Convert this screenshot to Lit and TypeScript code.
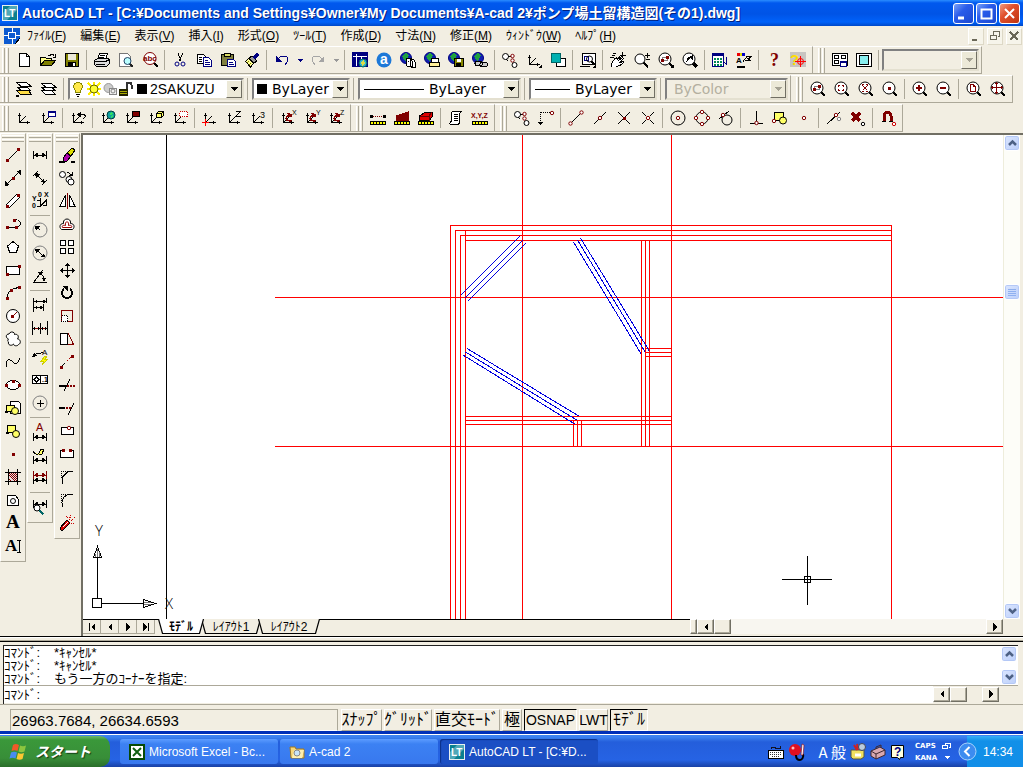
import { LitElement, html, svg, css, nothing } from "lit";
import { customElement, property } from "lit/decorators.js";

const R = "#800000";
const G = "#808080";
const Y = "#ffff66";

/* small drawing helpers on a 16 x 16 grid */
const p = (d: string, s = "#000", f = "none", w = 1) =>
  svg`<path d=${d} stroke=${s} fill=${f} stroke-width=${w}></path>`;
const dash = (d: string, s = "#000", f = "none", pattern = "1 1", w = 1) =>
  svg`<path d=${d} stroke=${s} fill=${f} stroke-dasharray=${pattern} stroke-width=${w}></path>`;
const t = (x: number, y: number, size: number, str: string, c = "#000", w = 400, fam = "Liberation Sans") =>
  svg`<text x=${x} y=${y} font-size=${size} fill=${c} font-weight=${w} font-family=${fam}>${str}</text>`;
const C = (x: number, y: number, r: number) =>
  `M${x - r} ${y}a${r} ${r} 0 1 0 ${2 * r} 0a${r} ${r} 0 1 0 ${-2 * r} 0z`;
const B = (x: number, y: number, w: number, h: number) => `M${x} ${y}h${w}v${h}h${-w}z`;
/* round outline kept smooth while straight strokes stay crisp */
const round = (x: number, y: number, r: number, s = "#000", f = "none") =>
  svg`<circle cx=${x} cy=${y} r=${r} stroke=${s} fill=${f} shape-rendering="geometricPrecision"></circle>`;
const dot = (x: number, y: number, c = R) => p(B(x - 1, y - 1, 3, 3), "none", c);
const ring = (x: number, y: number, c = R) => round(x, y, 1.7, c, "#fff");

const axes = [
  p("M3.5 4v8.5h10"),
  p("M3.5 12.5l6-6"),
  p("M2 6l1.5-3.5L5 6zM11 11l3.5 1.5-3.5 1.5z", "none", "#000"),
];
const lens = [p("M11 11l4 4", "#000", "none", 2), round(7, 7, 6, "#000", "#fff")];
const corner = p("M16 12v4h-4z", "none", "#000");
const globe = (x: number, y: number, r: number) => [
  round(x, y, r, "#004040", "#10a0a0"),
  p(`M${x - 2} ${y - 1}l2-2 2 1-2 2zM${x} ${y + 3}l1-3 2 1z`, "none", "#30e060"),
];
const swirl = [p("M12 6.5c-3-2-6 0-6 2s4 3 6 2", R, "none", 1.5), p("M7 3l5 1-3 3z", "none", R)];
const dimH = (y: number, c = "#000") => [
  p(`M1.5 ${y - 4}v8M14.5 ${y - 4}v8M2 ${y}h12`, c),
  p(`M2 ${y}l4-2.5v5zM14 ${y}l-4-2.5v5z`, "none", c),
];
const ruler = [p(B(0.5, 11.5, 15, 3), "#000", "#ff0"), p("M3.5 12v2M6.5 12v2M9.5 12v2M12.5 12v2")];
const web = [round(6, 6, 5.5, "#000080", "#1020b0"), p("M2 4l4-3 3 2-2 4-2 2z", "none", "#20a040")];

const ICONS: Record<string, unknown> = {
  new: [p("M3.5 1.5h7l3 3v10h-10z", "#000", "#fff"), p("M10.5 1.5v3h3")],
  open: [
    p("M.5 13.5v-8h5l1 1h5v3", "#000", "#ff8"),
    p("M.5 13.5l4-5h11l-4 5z", "#000", "#808000"),
    p("M8 3.5h2l1-1h2l1.5 2M15.5 2v3h-3"),
  ],
  save: [p(B(1.5, 1.5, 13, 13), "#000", "#808000"), p(B(4, 2, 8, 6), "none", "#ece9d8"), p(B(4, 10, 8, 5), "none", "#000"), p(B(9, 11, 2, 3), "none", "#fff")],
  print: [p("M5.5 1.5h8l-2 6h-8z", "#000", "#fff"), p("M6 3.5h5M5 5.5h5"), p("M.5 8.5l3-2h11l1 2v3l-3 3h-10l-2-2z", "#000", "#ddd"), p("M.5 9.5h11l4-2M2 12.5h9", "#000")],
  preview: [p("M1.5 1.5h8l3 3v10h-11z", "#777", "#fff"), p("M12 12l3 3", "#222", "none", 2), round(9.5, 9, 3.5, "#246", "#bff")],
  find: [p("M12 11l3.5 4", "#000", "none", 2), round(8, 6.5, 6, R, "#fff"), t(1, 9, 8, "abc", R, 700)],
  cut: [p("M6 1l3 8M11 1L7 9"), round(5, 12, 2, "#000080"), round(11, 12, 2, "#000080")],
  copy: [p("M1.5 2.5h6l2 2v7h-8z", "#000", "#fff"), p("M3 5.5h3M3 7.5h3M3 9.5h3"), p("M7.5 5.5h5l3 3v6h-8z", "#000080", "#fff"), p("M9 8.5h3M9 10.5h5M9 12.5h5", "#000080")],
  paste: [p("M1.5 2.5h12v11h-12z", "#000", "#808040"), p(B(4.5, 1.5, 6, 3), "#000", "#dd6"), p("M7.5 7.5h6l2 2v5h-8z", "#000080", "#fff"), p("M9 10.5h4M9 12.5h5", "#000080")],
  brush: [p("M1.5 9.5l3-3 5 5-3 3.5z", "#000", "#ff9"), p("M3 11l2-2M5 13l2-2", "#880"), p("M5 6l3-2 5 5-3 2z", "#000", "#999"), p("M9 5l4-4 2 2-4 4z", "#000080", "#000080")],
  undo: [p("M4 7c3-4 10-4 10 1 0 3-3 3-3 5", "#000080", "none", 1), p("M2 4v6h6z", "none", "#000080")],
  redo: [p("M12 7c-3-4-10-4-10 1 0 3 3 3 3 5", "#a5a5a5", "none", 1), p("M14 4v6H8z", "none", "#a5a5a5")],
  today: [p(B(0, 0, 16, 15), "none", "#000080"), p("M1 4.5h8v5M4.5 2v12M9 4.5h6", "#fff"), round(11, 11, 4, "#066", "#30b0d0"), p("M9 10l3-2 1 3-3 3z", "none", "#dd4")],
  ahome: [round(8, 8, 7.5, "none", "#1c78d8"), t(4, 12, 14, "a", "#fff", 700)],
  meet: [web, p("M6 9a3 3 0 0 1 6 0v5h-5zM10 8a3 3 0 0 1 5 2v5h-4z", "#000", "#fff"), p("M8 9h1M12 11h1")],
  publish: [web, p("M7 6h7l1 4h-8z", "#000", "#fff"), p("M5 10.5h10v4h-10z", "#000", "#fe9")],
  saveweb: [web, p(B(6.5, 6.5, 9, 8), "#000", "#880"), p(B(9, 7, 4, 3), "none", "#fff"), p(B(8, 11, 5, 3), "none", "#000")],
  link: [web, p("M4.5 9.5h4a2 2 0 0 1 0 4h-3a2 2 0 0 1-1-4zM10.5 10.5h3a2 2 0 0 1 0 4h-4a2 2 0 0 1 1-4z", "#000", "#ccc")],
  track: [round(3.5, 4.5, 3, "#000", "#fff"), p("M6 4.5h4"), ring(10.5, 4), ring(10.5, 8.5), p("M4.5 7l1 2"), round(12.5, 13, 2.5, "#000", "#fff")],
  ucsfly: [axes, corner],
  rects: [p("M6 6.5h9v8h-9z", "#000", "#fff"), p(B(1.5, 1.5, 9, 9), "#066", "#00b0b0")],
  zoomwin: [p(B(2.5, 1.5, 13, 11), "#000", "#fff"), p("M4 4.5h4v4h-4z", "#000080"), round(9.5, 7, 3), p("M11.5 9.5l3 3", "#000", "none", 2), p("M0 14.5h10"), corner],
  pan: [p("M1.5 14.5c0-5 2-7 5-9l1 2 3-4 1 1-3 4 4-3 1 1-4 4 4-1c0 2-4 5-8 5", "#000", "#fff"), p("M0 5.5h4M2 3.5h3M3 1.5h3M12.5 0v6M10 3.5h6", "#000")],
  zoomrt: [p("M9.5 10.5l4.5 5", "#000", "none", 2), round(6, 7, 5, "#000", "#fff"), p("M11 3.5h5M13.5 1v5M12 7.5h4", "#000")],
  zoombox: [lens, p(B(4.5, 5.5, 5, 3), G), dot(4, 8), dot(9, 5), corner],
  zoomprev: [p("M11 11l4 4", "#000", "none", 3), round(7, 7, 6, "#000", "#fff"), p("M4 10c1-5 4-6 6-6l1-2v6L8 6c-2 2-3 3-4 4z", "none", "#000")],
  props: [p(B(0.5, 1.5, 11, 13), "#000080", "#fff"), p(B(1, 2, 10, 2), "none", "#000080"), dash("M2 7h8M2 10h8M2 13h8", "#085", "none", "2 1", 2), p("M13.5 5h1v7M12 10l3 3", "#000080")],
  match: [p("M1 2.5h2.5", "#e00", "none", 3), p("M3.5 2.5H6", "#dd0", "none", 3), p("M6 2.5h2.5", "#00c", "none", 3), t(0, 11, 8, "A", "#000", 700), p("M1 14.5h8", "#000", "none", 2), p("M7 9.5l4-5h5M9 8.5h5l-2-2 3-1")],
  help: [t(4, 14, 18, "?", R, 700, "Liberation Serif")],
  helpx: [p(B(0, 0, 16, 15), "none", "#c8c4c0"), t(0, 13, 15, "?", "#fd0", 700), round(10.5, 9.5, 3, "#f00"), p("M10.5 4v11M5 9.5h11", "#f00")],
  layouts: [p("M.5 1.5h15v12h-15z", "#000", "#fff"), p(B(2.5, 3.5, 4, 3), "#000"), p(B(9.5, 3.5, 4, 3), "#000"), p(B(2.5, 8.5, 4, 3), "#000"), p(B(8.5, 9.5, 6, 5), "#000080", "#fff"), p("M8 9.5h7", "#000080", "none", 2)],
  layout1: [p(B(0.5, 1.5, 15, 13), "#000", "#fff"), p(B(3.5, 3.5, 9, 9), "#000", "#8ee")],
  layers: [p("M.5 9.5l4 4h11l-3-4z", "#000", "#fd4"), p("M1.5 6.5l4 3h9l-3-3z", "#000", "#fff"), p("M.5 1.5h10l4 3.5h-10z", "#000", "#fff"), p("M0 14.5h3", "#000", "none", 2)],
  layerprev: [p("M1.5 9.5l4 4h10l-4-4z", "#000", "#fff"), p("M1.5 6.5l4 3h10l-4-3z", "#000", "#fff"), p("M1.5 2.5h10l4 3.5h-10z", "#000", "#fff")],
  bulb: [p("M5.5 9.5c-3-3-2-8 2.5-8s5.500 5 2.500 8v2h-5z", "#880", "#ffe94a"), p("M6 13.5h4M7 15.5h2")],
  sun: [p("M2 2l12 12M14 2L2 14M8 1v14M1 8h14", "#fe0", "none", 2), round(8, 8, 4, "#660", "#ff3")],
  sunvp: [round(6.5, 7, 4.5, "#999", "#ccc"), p(B(7.5, 7.5, 7, 6), "#888", "#eee"), round(11, 10, 2, "#888")],
  lock: [p(B(1, 8, 9, 7), "none", "#220"), p("M2 10.5h7M2 12.5h7", "#aa0"), p("M8.5 8V4a2.5 2.5 0 0 1 5 0v4", "#333", "none", 2)],
  black: [p(B(3, 3, 10, 10), "none", "#000")],
  zbox: [lens, p(B(4.5, 5.5, 5, 3), G), dot(4, 8), dot(9, 5)],
  zdyn: [lens, p("M4.5 6V4.5H6M9.5 6V4.5H8M4.5 8v1.5H6M9.5 8v1.5H8", R)],
  zscale: [lens, p("M4.5 4.5l5 5M9.5 4.5l-5 5M4 3.5h2M8 3.5h2M4 10.5h2M8 10.5h2", R)],
  zcenter: [lens, dot(7, 7)],
  zin: [lens, p("M4 7h6M7 4v6", R, "none", 2)],
  zout: [lens, p("M4 7h6", R, "none", 2)],
  zall: [lens, p("M4.5 3.5h3l2 2v5h-5zM7.5 3.5v2h2", R)],
  zext: [lens, p("M1 6.5h12M6.5 1v12M2.5 5v3M11.5 5v3M5 2.5h3M5 11.5h3", R)],
  ucs: axes,
  ucswin: [axes, p(B(8.5, 1.5, 7, 5), "#000080", "#fff"), p("M8 2h8", "#000080", "none", 2)],
  ucsprev: [axes, p("M9 4.5h4c3 0 3 3 0 4"), p("M7 4.5l4-3v6z", "none", "#000")],
  ucsworld: [axes, globe(11, 5, 4)],
  ucsobj: [axes, p(B(8.5, 1.5, 7, 5), "#000", R)],
  ucsface: [axes, p("M8.5 3.5l2-2h5v4l-2 2h-5z", "#000", Y), p("M8.5 3.5h5v4M13.5 3.5l2-2")],
  ucsview: [axes, dash("M7.5 1.5h8v5h-8z", "#c00", "#fff")],
  ucsorigin: [axes, p("M0 12.5h7M3.5 9v7", "#f00", "none", 1)],
  ucsz: [axes, p("M9.5 1.5h5l-5 5h5")],
  ucs3: [axes, t(10, 8, 9, "3")],
  ucsrx: [axes, swirl, t(12, 5, 7, "X")],
  ucsry: [axes, swirl, t(12, 5, 7, "Y")],
  ucsrz: [axes, swirl, t(12, 5, 7, "Z")],
  dist: [ruler, dash("M3 6.5h11", R), dot(1, 6, "#000"), dot(14, 6, "#000")],
  area: [ruler, p("M2.5 10.5V6l12-4v8.5z", R, R)],
  mass: [ruler, p("M1.5 10.5V6l6-4h7v4l-3 4.5z", "#000", "#d00"), p("M2 6.5h9v4M11 6l3-4", "#600")],
  list: [p("M4.5 1.5h9c-2 0-2 3-2 5v5c0 3-1 3-2 3h-7c-1 0-1-3 1-3v-7c0-2 0-3 1-3z", "#000", "#fff"), p("M6 4.5h4M6 6.5h4M6 8.5h4M6 10.5h4")],
  xyz: [ruler, t(-1, 8, 7, "X,Y,Z", R, 700)],
  from: [dash("M2.5 2v10", "#000"), dash("M2.5 2.5h9", "#000"), p("M0 12h5l-2.5 3z", "none", "#000"), ring(14, 3)],
  endp: [p("M3 13L13 3"), ring(2.5, 13.5), ring(13.5, 2.5)],
  midp: [p("M2 14L14 2"), ring(8, 8)],
  intp: [p("M2 2l12 12M14 2L2 14"), p(B(7, 7, 2, 2), R, R)],
  appint: [p("M2 2l4 4M14 2l-4 4M14 14l-4-4M2 14l4-4"), ring(8, 8)],
  cen: [round(8, 8, 7), ring(8, 8)],
  quad: [round(8, 8, 6), ring(8, 2), ring(8, 14), ring(2, 8), ring(14, 8)],
  tan: [round(9, 10, 5), p("M1 9l10-8"), ring(5, 5)],
  perp: [p("M8.5 1v12M2 13.5h13"), ring(8.5, 13)],
  ins: [p(B(2.5, 2.5, 9, 8), "#000", Y), round(11, 10.5, 3.5, "#000", Y), ring(2, 11)],
  node: [ring(8, 8)],
  near: [p("M1 14L14 2"), ring(10, 5), ring(13, 9, G)],
  none: [p("M2 3l8 8M10 3l-8 8", R, "none", 3), ring(13, 14, "#000")],
  osnap: [p("M4 12V6a3.5 3.5 0 0 1 7 0v6", R, "none", 3), p("M2 11.5h4M9 11.5h4", "#000"), ring(14, 14, "#c00")],
  line: [p("M3 13L13 3"), dot(2, 13), dot(13, 2)],
  xline: [p("M2 14L14 2"), dot(8, 8), p("M0 16v-5l5 4zM16 0v5l-5-4z", "none", "#000")],
  mline: [p("M1.5 11.5l10-10 3 3-10 10z", "#000", "#fff"), dot(2, 13), dot(13, 2)],
  pline: [p("M9 4.5c8-3 8 7 2 7H2"), dot(9, 4), dot(2, 11), dot(11, 11)],
  polygon: [p("M8 2.5l5.5 4.5-2 6h-7l-2-6z", "#000", "#fff")],
  rect: [p(B(1.5, 4.5, 13, 8), "#000", "#fff"), dot(2, 12), dot(14, 4)],
  arc: [p("M2 13c0-6 5-10 12-10.5"), dot(2, 13), dot(6, 5), dot(14, 2)],
  circle: [round(8, 8, 6.5, "#000", "#fff"), p("M7.5 8.5l4-4", R), dot(7, 8)],
  cloud: [svg`<path shape-rendering="geometricPrecision" stroke="#000" fill="#fff" d="M3.500 8C.5 7 .5 3 4 3c1-3 6-2.500 5.500.5c3-1 5 2 3 4.500c3 0 4 4.500 1 5.500c-1 2-5 1.500-5-.5c-2 2.500-6 1-5-2c-1-.5-1-2 0-3z"></path>`],
  spline: [p("M1 13c0-12 6-6 8-4s4 0 6-5")],
  ellipse: [svg`<ellipse cx="8" cy="8" rx="6.500" ry="4.500" stroke="#000" fill="#fff"></ellipse>`, dot(1, 8), dot(14, 8), dot(8, 4)],
  insert: [p("M5.5 1.5h8l2 2v10h-10z", "#000", "#fff"), p(B(1.5, 5.5, 8, 6), "#000", Y), round(10, 11, 3.5, "#000", Y), p("M0 11.5h3", "#000", "none", 2)],
  block: [p(B(2.5, 2.5, 8, 7), "#000", Y), round(11, 11, 3.5, "#000", Y), p("M1 9.5h3", "#000", "none", 2)],
  point: [dot(8, 8)],
  hatch: [p(B(3, 3, 10, 10), "none", "#edd"), p("M3 9l4 4M3 5l8 8M5 3l8 8M9 3l4 4M3 12l1 1M3 3l10 10M7 3l6 6", R), p("M0 3.5h16M0 12.5h16M3.5 0v16M12.5 0v16")],
  region: [p("M2.5 3.5h8l3 4v6h-11z", "#000", "#fff"), round(8, 9, 2.5)],
  mtext: [t(1, 13, 19, "A", "#000", 700, "Liberation Serif")],
  atext: [t(0, 13, 17, "A", "#000", 700, "Liberation Serif"), p("M12 2.5h4M14.5 3v11M12 14.5h4")],
  dlin: dimH(8),
  dali: [p("M1 6l5-5M10 15l5-5M4 4l8 8"), p("M3 3l5 1-4 4zM13 13l-5-1 4-4z", "none", "#000")],
  dord: [t(0, 8, 7, "Y", "#000", 700), t(0, 15, 7, "0", "#000", 700), t(6, 4, 7, "0", "#000", 700), t(12, 4, 7, "X", "#000", 700), p("M5 7.5h4M5 13.5h4M8.5 5v8l6-6M14.5 6v6h-4")],
  drad: [round(8, 8, 7, G), p("M8 8L5 5"), p("M3 4h5l-4 5z", "none", "#000")],
  ddia: [round(8, 8, 7, G), p("M5 5l6 6"), p("M3 4h5l-4 4zM13 12H8l4-4z", "none", "#000")],
  dang: [p("M1 14.5h14M2 14l9-12M7 5c4 1 5 4 5 8"), p("M6 4h5L8 8zM12 14l-2-4h4z", "none", "#000")],
  dbase: [p("M1.5 1v14M14.5 1v5M11.5 7v7M2 4.5h12M2 10.5h9"), p("M2 4.5l3-2v4zM14 4.5l-3-2v4zM2 10.5l3-2v4zM11 10.5l-3-2v4z", "none", "#000")],
  dcont: [p("M.5 1v14M15.5 1v14M8.5 3v11"), p("M1 8.5h14", R), p("M1 8.5l2-2v4zM15 8.5l-2-2v4zM8 8.5l-2-2v4zM9 8.5l2-2v4z", "none", "#000")],
  qlead: [p("M3 6c4-4 5 0 8-3"), p("M0 8l2-4 3 3z", "none", "#000"), t(10, 6, 8, "A"), p("M13 7l-4 5h3l-2 4 6-6h-3l2-3z", "#cc0", "#ff0")],
  tol: [p(B(0.5, 3.5, 15, 8), "#000", "#fff"), p("M8.5 3v9"), p("M4.5 5L7 7.5 4.5 10 2 7.5z"), t(10, 10, 7, ".1", "#000", 700)],
  cmark: [round(8, 8, 7, G), p("M5 8.5h7M8.5 5v7")],
  dedit: [dimH(13), t(4, 7, 11, "A", R)],
  dtedit: [dimH(13), p("M1 4c2 4 4 4 6 2l2-4h3l-2 5-3 1", "#000", Y)],
  dupd: [dimH(10), dimH(5, R)],
  dstyle: [dimH(5), round(5, 9, 3, "#000", "#fff"), p("M7.5 11.5l4 4", "#066", "none", 2)],
  erase: [p("M4 11l4-5 4 3-4 5H5z", "#000", "#a0a"), p("M8 6l5-5 3 2-4 6z", "#000", "#dd0"), p("M0 14.5h6M12 14.5h4", "#000", "none", 2)],
  mcopy: [round(3.5, 4.5, 3, "#000", "#fff"), round(10, 9.5, 3, "#000", "#fff"), round(12, 12, 3, "#000", "#fff"), p("M8 2l5 3M13 2v3h-3")],
  mirror: [p("M6.5 2v11.5H1z", "#000", "#fff"), p("M10.5 2v11.5H16z", "#000", "#fff"), p("M8.5 0v16", R)],
  offset: [svg`<g shape-rendering="geometricPrecision"><path d="M2.500 13.500c-2.500-2-2-6 2-6c-1-6 8-6 7 0c4 0 4.500 4 2 6z" stroke="#000" fill="#fff"></path><path d="M3.500 11.500c-1-2 1-2.500 3-2c-1-5 4-5 3 0c2-.5 4 0 3 2z" stroke="#900" fill="none"></path></g>`],
  array: [p(B(1.5, 1.5, 5, 5), "#000", "#fff"), p(B(9.5, 1.5, 5, 5), "#000", "#fff"), p(B(1.5, 9.5, 5, 5), "#000", "#fff"), p(B(9.5, 9.5, 5, 5), "#000", "#fff")],
  move: [p("M1 8.5h14M8.5 1v14"), p("M1 8.5l3-3v6zM16 8.5l-3-3v6zM8.5 1l-3 3h6zM8.5 16l-3-3h6z", "none", "#000")],
  rotate: [p("M5 4a5 5 0 1 0 6 0", "#000", "none", 2), p("M3 1h6v6z", "none", "#000")],
  scale: [p(B(2.5, 2.5, 11, 11), R), dash("M2.5 7.5h6v6h-6z", "#000", "#fff")],
  stretch: [p("M1.5 2.5h7v11h-7z", "#000", "#fff"), p("M8.5 2.5h1l5 11h-6", R)],
  lengthen: [dash("M2 13L13 2", "#a00", "none", "2 2"), p("M2 13l4-4"), dot(2, 13), dot(13, 2)],
  trim: [p("M0 8.5h7", "#000", "none", 2), dash("M8 8.5h8", R, "none", "2 1", 2), p("M5 14l6-12")],
  extend: [p("M0 7.5h6", "#000", "none", 2), dash("M7 7.5h6", R, "none", "2 1", 2), p("M9 15l6-12")],
  break1: [p(B(2.5, 4.5, 12, 7), "#000", "#fff"), ring(10, 5)],
  break2: [p("M4 4.5H1.5v7h13v-7H12", "#000", "#fff"), dot(4, 4), dot(11, 4)],
  chamfer: [p("M14 2.5H9l-6 6v6"), dash("M9 2.5H2.5v6")],
  fillet: [p("M14 2.5h-3a8 8 0 0 0-8 8v4"), dash("M9 2.5H2.5v6")],
  explode: [p("M1 13l7-8 3 3-7 7H2z", "#000", "#d00"), p("M4 12l5-5", "#fff"), dash("M10 5l2-5M12 6l4-4M12 8h4M9 3L7 1", "#c00")],
  down: [p("M5 7h6l-3 3z", "none", "#000080")],
  downgray: [p("M5 7h6l-3 3z", "none", "#999")],
};

const LABELS: Record<string, string> = { new: "新規作成", open: "開く", save: "上書き保存", print: "印刷", undo: "元に戻す", redo: "やり直し", cut: "切り取り", copy: "コピー", paste: "貼り付け" };

@customElement("cad-icon")
class CadIcon extends LitElement {
  @property() name = "";
  static styles = css`
    :host { display: block; width: 16px; height: 16px; flex: none; }
    .glyph { display: block; width: 16px; height: 16px; overflow: visible; }
  `;
  render() {
    return html`<svg class="glyph" viewBox="0 0 16 16" shape-rendering="crispEdges" aria-hidden="true">${ICONS[this.name] ?? nothing}</svg>`;
  }
}

@customElement("cad-toolbar")
class CadToolbar extends LitElement {
  @property() items = "";
  @property({ type: Boolean, reflect: true }) vertical = false;
  @property({ type: Boolean, reflect: true }) first = false;
  static styles = css`
    :host { display: flex; box-sizing: border-box; height: 28px; align-items: center; border-top: 1px solid #fff; border-bottom: 1px solid #aca899; border-right: 1px solid #aca899; padding-right: 2px; flex: none; }
    :host([vertical]) { flex-direction: column; width: 26px; height: auto; padding: 0 0 4px; border-bottom: 1px solid #aca899; border-left: 1px solid #fff; }
    .grip { width: 7px; height: 25px; margin: 0 3px 0 5px; flex: none; box-sizing: border-box; background: linear-gradient(90deg, #fff 0 1px, #f2eee2 1px 2px, #aca899 2px 3px, transparent 3px 4px, #fff 4px 5px, #f2eee2 5px 6px, #aca899 6px 7px); }
    :host([first]) .grip { margin-left: 2px; }
    :host([vertical]) .grip { width: 22px; height: 7px; margin: 1px 0; background: linear-gradient(180deg, #fff 0 1px, #f2eee2 1px 2px, #aca899 2px 3px, transparent 3px 4px, #fff 4px 5px, #f2eee2 5px 6px, #aca899 6px 7px); }
    .tool { width: 24px; height: 24px; padding: 0; border: 0; background: none; display: flex; align-items: center; justify-content: center; flex: none; }
    .tool.small { width: 12px; }
    :host([vertical]) .tool { height: 23px; }
    .sep { width: 1px; height: 20px; margin: 0 3px 0 2px; background: #aca899; flex: none; }
    :host([vertical]) .sep { width: 20px; height: 1px; margin: 3px 0 2px; }
  `;
  render() {
    return html`<span class="grip"></span>
      ${this.items.split(" ").filter(Boolean).map((n) =>
        n === "|" ? html`<span class="sep"></span>`
        : html`<button type="button" class="tool ${n.startsWith("down") ? "small" : ""}" aria-label=${LABELS[n] ?? n}><cad-icon name=${n}></cad-icon></button>`)}
      <slot></slot>`;
  }
}

const seg = (x1: number, y1: number, x2: number, y2: number) => `M${x1} ${y1}L${x2} ${y2}`;
const RED = [
  seg(450.5, 619, 450.5, 225), seg(455.5, 619, 455.5, 230), seg(460.5, 619, 460.5, 235), seg(465.5, 619, 465.5, 230),
  seg(450, 225.5, 892, 225.5), seg(455, 230.5, 892, 230.5), seg(460, 235.5, 892, 235.5), seg(465, 240.5, 892, 240.5),
  seg(522.5, 135, 522.5, 619), seg(671.5, 135, 671.5, 619), seg(891.5, 225, 891.5, 619),
  seg(641.5, 240, 641.5, 446), seg(645.5, 240, 645.5, 446), seg(649.5, 240, 649.5, 446),
  seg(645, 348.5, 671, 348.5), seg(645, 352.5, 671, 352.5), seg(645, 356.5, 671, 356.5),
  seg(465, 416.5, 671, 416.5), seg(465, 420.5, 671, 420.5), seg(465, 424.5, 671, 424.5),
  seg(573.5, 420, 573.5, 446), seg(577.5, 420, 577.5, 446), seg(581.5, 420, 581.5, 446),
  seg(275, 446.5, 1400, 446.5), seg(275, 297.5, 1400, 297.5),
].join("");
const BLUE = [
  seg(461, 295, 520, 236), seg(465, 298, 523, 240), seg(468, 301, 526, 243),
  seg(573.5, 242, 641.5, 354.5), seg(577.5, 240, 645.5, 352.5), seg(580.5, 238, 649, 350.5),
  seg(467, 348.5, 579.5, 416.5), seg(465.5, 352, 577.5, 420.5), seg(463, 355, 575.5, 424.5),
].join("");

const tri = (d: string) => html`<svg class="tri" viewBox="0 0 10 10" width="10" height="10" shape-rendering="crispEdges" aria-hidden="true"><path d=${d}></path></svg>`;
const LEFT = "M7 1v8L3 5z", RIGHT = "M3 1v8l4-4z", DOWN = "M1 3h8L5 7z";
const chev = (up: boolean) => html`<svg width="9" height="8" viewBox="0 0 9 8" aria-hidden="true"><path d=${up ? "M1 6l3.5-3.5L8 6" : "M1 2l3.5 3.5L8 2"} fill="none" stroke="#4d6185" stroke-width="2.500"></path></svg>`;
const ltLogo = html`<svg width="16" height="16" viewBox="0 0 16 16" aria-hidden="true"><rect x=".5" y=".5" width="15" height="15" fill="#0a8090" stroke="#e8f0f0"></rect><path d="M1 8l7-7h7v4L5 15H1z" fill="#50a8b8"></path><text x="2" y="12" font-family="Liberation Sans" font-size="10" font-weight="700" fill="#fff">LT</text></svg>`;

const combo = (cls: string, label: string, text: string, before: unknown = nothing, disabled = false) => html`
  <span class="combo ${cls}">${before}<select aria-label=${label} ?disabled=${disabled}><option>${text}</option></select><span class="drop">${tri(DOWN)}</span></span>`;

const MENUS: [string, string][] = [["ﾌｧｲﾙ", "F"], ["編集", "E"], ["表示", "V"], ["挿入", "I"], ["形式", "O"], ["ﾂｰﾙ", "T"], ["作成", "D"], ["寸法", "N"], ["修正", "M"], ["ｳｨﾝﾄﾞｳ", "W"], ["ﾍﾙﾌﾟ", "H"]];
const MODES: [string, number, boolean][] = [["ｽﾅｯﾌﾟ", 41, false], ["ｸﾞﾘｯﾄﾞ", 48, false], ["直交ﾓｰﾄﾞ", 66, false], ["極", 20, false], ["OSNAP", 53, true], ["LWT", 29, false], ["ﾓﾃﾞﾙ", 38, true]];
const TABS: [string, number, boolean][] = [["ﾓﾃﾞﾙ", 46, true], ["ﾚｲｱｳﾄ1", 60, false], ["ﾚｲｱｳﾄ2", 62, false]];

@customElement("app-root")
class AppRoot extends LitElement {
  static styles = css`
    :host { display: flex; flex-direction: column; min-height: 100vh; background: #f2eee2; color: #000; font: 12px/16px "Liberation Sans", "Noto Sans CJK JP", sans-serif; overflow: hidden; }
    button { font: inherit; color: inherit; padding: 0; border: 0; background: none; display: flex; align-items: center; justify-content: center; flex: none; box-sizing: border-box; white-space: nowrap; }
    select, input { font: inherit; color: inherit; border: 0; outline: 0; padding: 0; margin: 0; background: none; appearance: none; min-width: 0; flex: 1; border-radius: 0; }
    .grow { flex: 1; }

    .title { height: 26px; display: flex; align-items: center; padding: 0 3px 0 2px; box-sizing: border-box; gap: 4px; background: linear-gradient(#2a8cff 0, #0058ee 3px, #0054e6 14px, #0062fa 22px, #0048c8 26px); color: #fff; }
    .title h1 { margin: 0; font: 700 14px/20px "Liberation Sans", "Noto Sans CJK JP", sans-serif; flex: 1; min-width: 0; white-space: nowrap; overflow: hidden; text-shadow: 1px 1px #002080; }
    .wb { width: 21px; height: 21px; border: 1px solid #fff; border-radius: 3px; background: linear-gradient(135deg, #7aa2f8, #2a5cea 40%, #1c48d0); }
    .wb.close { background: linear-gradient(135deg, #f09a80, #e0502c 40%, #c03410); }
    .wbs { display: flex; gap: 2px; }

    .menu { height: 20px; display: flex; align-items: center; padding-left: 4px; }
    .menu button { height: 18px; margin-left: 14px; }
    .menu button:first-of-type { margin-left: 7px; }
    .menu u { text-underline-offset: 1px; }
    .mdi { display: flex; gap: 3px; padding-right: 1px; }
    .mdi .mb { width: 16px; height: 17px; margin: 0; background: #f6f4ea; border: 1px solid; border-color: #fff #ddd8c6 #ddd8c6 #fff; }

    .bars { display: flex; height: 29px; align-items: flex-start; }
    .combo { display: flex; align-items: center; height: 22px; box-sizing: border-box; background: #fff; border: 2px solid; border-color: #808080 #e4e0d0 #e4e0d0 #808080; flex: none; font: 14px/18px "DejaVu Sans", sans-serif; }
    .combo .drop { width: 16px; height: 18px; box-sizing: border-box; background: #ece9d8; border: 1px solid; border-color: #fff #716f64 #716f64 #fff; display: flex; align-items: center; justify-content: center; }
    .combo.layer { width: 176px; font: 14px/18px "Liberation Sans", sans-serif; }
    .combo.color { width: 98px; }
    .combo.color select { padding-left: 2px; }
    .combo.ltype { width: 163px; }
    .combo.lweight { width: 128px; }
    .combo.plot { width: 123px; background: none; color: #b4b0a0; padding-left: 7px; }
    .combo.vport { width: 97px; background: none; }
    .plot .tri, .vport .tri { fill: #a5a294; }
    .rule { height: 1px; background: #000; margin: 0 5px 0 4px; flex: none; }
    .ltype .rule { width: 60px; }
    .lweight .rule { width: 35px; }
    .combo select:disabled { opacity: 1; color: #b4b0a0; }
    .vs { width: 1px; height: 22px; margin: 0 4px 0 3px; background: #aca899; flex: none; }

    .main { flex: 1; display: flex; min-height: 300px; }
    .palettes { display: flex; width: 81px; align-items: flex-start; gap: 1px; }
    .work { flex: 1; min-width: 0; display: flex; flex-direction: column; border-left: 2px solid #716f64; border-top: 2px solid #716f64; }
    .view { flex: 1; display: flex; min-height: 0; padding-right: 3px; }
    .canvas { flex: 1; min-width: 0; background: #fff; position: relative; overflow: hidden; }
    .canvas svg { position: absolute; width: 100%; height: 100%; display: block; }
    .vscroll { width: 17px; display: flex; flex-direction: column; background: #fdfdf8; box-sizing: border-box; border-left: 1px solid #eeeddc; }
    .xb { width: 16px; height: 16px; border: 1px solid #fff; border-radius: 3px; background: linear-gradient(135deg, #dbe6ff, #bccffa); box-shadow: inset 0 0 0 1px #b4c8f6; }
    .thumb { margin-top: 133px; color: #8fb0f0; }
    .strip { height: 17px; display: flex; padding-right: 20px; }
    .leftstrip { display: flex; flex: 607 1 0; border-top: 1px solid #000; min-width: 0; height: 15px; box-sizing: border-box; }
    .hscroll { display: flex; flex: 313 1 0; height: 15px; }
    .cb { width: 17px; height: 15px; background: #f2eee2; border: 1px solid; border-color: #fff #716f64 #716f64 #fff; box-shadow: inset -1px -1px #aca899; }
    .cb.split { width: 7px; box-sizing: border-box; }
    .track { flex: 1; background: #f8f6f0; }
    .nav { width: 18px; height: 14px; border-right: 1px solid #aca899; border-bottom: 1px solid #aca899; }
    .tabs { display: flex; margin-left: 3px; }
    .tab { position: relative; height: 15px; margin-top: -1px; margin-right: -3px; font: 12px/14px "Liberation Sans", "Noto Sans CJK JP", sans-serif; }
    .tab.on { font-weight: 700; z-index: 1; }
    .tab svg { position: absolute; inset: 0; width: 100%; height: 15px; }
    .tab span { position: relative; }

    .split-bar { height: 9px; box-sizing: border-box; border-top: 1px solid #000; border-bottom: 3px solid #f2eee2; background: linear-gradient(#fff 0 1px, #f2eee2 1px 3px, #aca899 3px 4px, #000 4px 5px); }
    .command { margin: 0 5px 0 3px; box-sizing: border-box; border-top: 1px solid #222; border-left: 1px solid #222; height: 59px; display: grid; grid-template-rows: 40px 1fr; font: 13px/13px "Liberation Sans", "Noto Sans CJK JP", sans-serif; }
    .history { display: flex; background: #fff; border-bottom: 1px solid #aca899; }
    .lines { margin: 0; padding: 0; flex: 1; list-style: none; }
    .lines li { display: flex; height: 13px; white-space: nowrap; }
    .pr { width: 50px; flex: none; }
    .cscroll { width: 16px; display: flex; flex-direction: column; justify-content: space-between; height: 39px; margin-right: 1px; }
    .prompt { display: flex; align-items: center; height: 16px; padding-right: 19px; }
    .prompt .field { display: flex; flex: 1; background: #fff; align-items: center; height: 17px; }
    .prompt .track { flex: none; width: 15px; }

    .status { height: 27px; box-sizing: border-box; border-top: 1px solid #aca899; padding: 4px 0 0 10px; display: flex; gap: 2px; align-items: flex-start; font: 16px/20px "Liberation Sans", "Noto Sans CJK JP", sans-serif; }
    .coords { width: 328px; height: 22px; box-sizing: border-box; border: 1px solid; border-color: #aca899 #aca899 #fff #aca899; padding-left: 1px; font-size: 15px; line-height: 22px; margin-right: 1px; }
    .mode { height: 22px; border: 1px solid; border-color: #fff #aca899 #aca899 #fff; }
    .mode.on { border-color: #000 #fff #fff #000; }
    .mode.latin { font-size: 14px; }

    .taskbar { height: 36px; box-sizing: border-box; border-top: 3px solid #0030b8; display: flex; align-items: stretch; background: linear-gradient(#fff 0 1px, #3c82f0 1px 3px, #245edb 8px, #2663e4 26px, #1941a5 33px); color: #fff; font: 12px/16px "Liberation Sans", "Noto Sans CJK JP", sans-serif; }
    .start { width: 110px; margin-top: 2px; border-radius: 0 10px 10px 0; background: linear-gradient(#6cb86c 0, #3a983a 4px, #388e38 22px, #2a6e2a 31px); font: italic 700 14px/20px "Liberation Sans", "Noto Sans CJK JP", sans-serif; gap: 6px; text-shadow: 1px 1px 1px #143c14; padding-right: 10px; }
    .tasks { display: flex; padding: 5px 0 2px 10px; gap: 2px; flex: 1; min-width: 0; }
    .task { width: 158px; height: 25px; border-radius: 3px; background: linear-gradient(#5c9cff, #3c81f3 5px, #3878ee); justify-content: flex-start; padding-left: 9px; gap: 4px; flex: 0 1 158px; min-width: 0; }
    .task.on { background: #1b4fc4; box-shadow: inset 1px 1px 1px #0c2f88; }
    .tray { display: flex; align-items: center; padding-top: 2px; }
    .tray svg { flex: none; margin-right: 4px; }
    .ime { font: 15px/18px "Noto Sans CJK JP", sans-serif; margin: 0 4px 0 8px; }
    .lockkeys { font: 700 7px/12px "DejaVu Sans", sans-serif; width: 27px; margin-left: 6px; display: grid; }
    .tray .mini { margin: 0 16px 0 0; }
    .clockbox { height: 31px; padding-right: 10px; background: linear-gradient(#38b0f8, #1290e8 5px, #118ee8); display: flex; align-items: center; }
    .tray .clockbox svg { margin: 0 6px 0 -9px; }
  `;

  private titleBar() {
    const b = (cls: string, label: string, d: string, w = 2) => html`<button type="button" class="wb ${cls}" aria-label=${label}><svg width="15" height="15" viewBox="0 0 15 15"><path d=${d} fill="none" stroke="#fff" stroke-width=${w}></path></svg></button>`;
    return html`<header class="title">${ltLogo}<h1>AutoCAD LT - [C:¥Documents and Settings¥Owner¥My Documents¥A-cad 2¥ポンプ場土留構造図(その1).dwg]</h1>
      <div class="wbs">${b("", "最小化", "M2 12h6", 3)}${b("", "最大化", "M2.5 12.5v-9h10v9zM2 3.5h11")}${b("close", "閉じる", "M3 3l9 9M12 3l-9 9", 2)}</div></header>`;
  }

  private menuBar() {
    const b = (label: string, d: string, w = 2) => html`<button type="button" class="mb" aria-label=${label}><svg width="12" height="12" viewBox="0 0 12 12" shape-rendering="crispEdges"><path d=${d} fill="none" stroke="#6b6858" stroke-width=${w}></path></svg></button>`;
    return html`<nav class="menu"><svg width="16" height="16" viewBox="0 0 16 16" shape-rendering="crispEdges" aria-hidden="true"><rect width="16" height="16" fill="#0c5ad0"></rect><path d="M4.5 4.5h7v6h-7zM8 0v4M8 11v5M0 7.5h4M12 7.5h4" fill="none" stroke="#fff"></path><path d="M16 10v6h-5z" fill="#fff" stroke="#000"></path></svg>
      ${MENUS.map(([l, k]) => html`<button type="button">${l}(<u>${k}</u>)</button>`)}
      <span class="grow"></span><div class="mdi">${b("最小化", "M2 10h5")}${b("元に戻す", "M4.5 4.5v-3h6v5h-2M1.5 5.5h6v4h-6zM1 5h7M4 1h7", 1)}${b("閉じる", "M2 2l8 8M10 2l-8 8")}</div></nav>`;
  }

  private drawing() {
    return html`<div class="canvas"><svg shape-rendering="crispEdges" role="img" aria-label="図面"><g transform="translate(-83 -135)" fill="none">
      <path d=${RED} stroke="#f00"></path><path d=${BLUE} stroke="#0000e0"></path>
      <path d="M166.5 135v484" stroke="#000"></path>
      <path d="M92.5 598.5h9v9h-9zM97.5 598v-40M93.5 557.5h8l-4-11zM102 603.5h41M143.5 599.5v8l12-4z" stroke="#000"></path>
      <path d="M97.5 549v8M99.5 552v5M95.5 554v3M144 602.5h7M144 604.5h7" stroke="#777"></path>
      <path d="M782 579.5h50M807.5 556v49M804.5 576.5h6v6h-6z" stroke="#000"></path>
      <text x="95" y="536" font-size="15" font-family="Open Sans" font-weight="300" fill="#000">Y</text>
      <text x="165" y="609" font-size="15" font-family="Open Sans" font-weight="300" fill="#000">X</text></g></svg></div>`;
  }

  private workspace() {
    return html`<section class="work"><div class="view">${this.drawing()}
        <div class="vscroll"><button type="button" class="xb" aria-label="上へ">${chev(true)}</button>
          <button type="button" class="xb thumb" aria-label="スクロール"><svg width="8" height="9" viewBox="0 0 8 9"><path d="M0 1.5h8M0 3.5h8M0 5.5h8M0 7.5h8" stroke="currentColor"></path></svg></button>
          <span class="grow"></span><button type="button" class="xb" aria-label="下へ">${chev(false)}</button></div></div>
      <div class="strip"><div class="leftstrip">
          ${["M8 1v8L4 5zM2 1h1v8h-1z", LEFT, RIGHT, "M2 1v8l4-4zM7 1h1v8h-1z"].map((d, i) => html`<button type="button" class="nav" aria-label=${"タブ " + i}>${tri(d)}</button>`)}
          <div class="tabs">${TABS.map(([l, w, on]) => html`<button type="button" class="tab ${on ? "on" : ""}" style="width:${w}px"><svg viewBox="0 0 ${w} 15" aria-hidden="true"><path d="M.5 0l4 14.5h${w - 9}l4-14.5" fill=${on ? "#fff" : "#f2eee2"} stroke="#000" stroke-width="1.200"></path></svg><span>${l}</span></button>`)}</div></div>
        <div class="hscroll"><span class="cb split"></span><button type="button" class="cb" aria-label="左へ">${tri(LEFT)}</button><button type="button" class="cb" aria-label="スクロール"></button><span class="track"></span><button type="button" class="cb" aria-label="右へ">${tri(RIGHT)}</button></div></div></section>`;
  }

  private commandArea() {
    return html`<div class="split-bar"></div><section class="command"><div class="history"><ul class="lines">
          ${["*ｷｬﾝｾﾙ*", "*ｷｬﾝｾﾙ*", "もう一方のｺｰﾅｰを指定:"].map((l) => html`<li><span class="pr">ｺﾏﾝﾄﾞ:</span>${l}</li>`)}</ul>
        <div class="cscroll"><button type="button" class="xb" aria-label="上へ">${chev(true)}</button><button type="button" class="xb" aria-label="下へ">${chev(false)}</button></div></div>
      <div class="prompt"><div class="field"><label class="pr" for="cmd">ｺﾏﾝﾄﾞ:</label><input id="cmd" type="text"></div>
        <button type="button" class="cb" aria-label="左へ">${tri(LEFT)}</button><button type="button" class="cb" aria-label="スクロール"></button><span class="track"></span><button type="button" class="cb" aria-label="右へ">${tri(RIGHT)}</button></div></section>
      <div class="status"><output class="coords">26963.7684, 26634.6593</output>
        ${MODES.map(([l, w, on]) => html`<button type="button" class="mode ${on ? "on" : ""} ${/^[A-Z]/.test(l) ? "latin" : ""}" aria-pressed=${on ? "true" : "false"} style="width:${w}px">${l}</button>`)}</div>`;
  }

  private taskBar() {
    return html`<footer class="taskbar"><button type="button" class="start"><svg width="20" height="18" viewBox="0 0 20 18" aria-hidden="true"><path d="M4 2c2-1.5 4-1 6 0l-1.5 6c-2-1-4-1-6 0z" fill="#f05a28"></path><path d="M11 2.5c2 1 4 1 6 0l-1.5 6c-2 1-4 1-6 0z" fill="#8cc63f"></path><path d="M2 9.5c2-1 4-1 6 0l-1.5 6c-2-1-4-1-6 0z" fill="#4a8cf0"></path><path d="M9 10c2 1 4 1 6 0l-1.5 6c-2 1-4 1-6 0z" fill="#fcc832"></path></svg>スタート</button>
      <div class="tasks">
        <button type="button" class="task"><svg width="16" height="16" viewBox="0 0 16 16" aria-hidden="true"><rect x="1" y="1" width="14" height="14" fill="#fff" stroke="#064a06" stroke-width="2"></rect><path d="M4 4l8 8M12 4l-8 8" stroke="#106010" stroke-width="2"></path></svg>Microsoft Excel - Bc...</button>
        <button type="button" class="task"><svg width="16" height="16" viewBox="0 0 16 16" aria-hidden="true"><path d="M1 3h5l1 2h8v9H2z" fill="#f8d878" stroke="#a07820"></path><path d="M5 6h10l-2 8H3z" fill="#fff0b0"></path><circle cx="8" cy="9" r="3" fill="#c8e4f8" stroke="#888"></circle></svg>A-cad 2</button>
        <button type="button" class="task on">${ltLogo}AutoCAD LT - [C:¥D...</button></div>
      <div class="tray">
        <svg width="16" height="16" viewBox="0 0 16 16" shape-rendering="crispEdges"><path d="M3 5v-2h4v1h5v-2" fill="none" stroke="#112"></path><rect x=".5" y="6.5" width="15" height="8" fill="#fff" stroke="#000"></rect><path d="M2 8.5h12M2 10.5h12M4 12.5h8" stroke="#333" stroke-dasharray="1 1"></path></svg>
        <svg width="18" height="18" viewBox="0 0 18 18"><circle cx="7" cy="7" r="6" fill="#e01020"></circle><circle cx="5" cy="5" r="1.500" fill="#fbb"></circle><path d="M8 12c0 4 2 5 4 5s4-3 3-6" fill="none" stroke="#000" stroke-width="2"></path><path d="M14 1l2 1-1 10h-2z" fill="#fff" stroke="#900" stroke-width=".6"></path></svg>
        <span class="ime">A 般</span>
        <svg width="16" height="17" viewBox="0 0 16 17"><path d="M1 7h13v7l-3 2H3l-2-2z" fill="#f0e060" stroke="#554"></path><path d="M4 2l3 5M7 1l1 6" stroke="#d02020" stroke-width="2"></path><circle cx="12" cy="4" r="3.500" fill="#bcd" stroke="#445"></circle><path d="M5 12h6" stroke="#fff" stroke-width="3"></path></svg>
        <svg width="16" height="16" viewBox="0 0 16 16"><path d="M1 7l9-4 5 3v5l-9 4-5-3z" fill="#d8a8b0" stroke="#402830"></path><path d="M1 7l5 3 9-4M6 10v5M6 5v-2l5-2v3" fill="none" stroke="#402830"></path></svg>
        <svg width="15" height="16" viewBox="0 0 15 16"><path d="M1.5 1.5h12v12h-3l-1 2-2-2h-6z" fill="#ffd" stroke="#000"></path><text x="4" y="12" font-family="Liberation Sans" font-weight="700" font-size="12" fill="#000080">?</text></svg>
        <span class="lockkeys"><span>CAPS</span><span>KANA</span></span>
        <svg class="mini" width="9" height="20" viewBox="0 0 9 20" shape-rendering="crispEdges"><path d="M3.5 3.5v-2h5v4h-2M.5 3.5h5v3h-5z" fill="none" stroke="#fff"></path><path d="M2 14h6l-3 3z" fill="#fff"></path></svg>
        <div class="clockbox"><svg width="19" height="19" viewBox="0 0 19 19" aria-hidden="true"><circle cx="9.5" cy="9.5" r="8.500" fill="#3c8cf0" stroke="#a8d4fc"></circle><path d="M11.5 5L7 9.5l4.5 4.5" fill="none" stroke="#fff" stroke-width="2"></path></svg><time>14:34</time></div></div></footer>`;
  }

  render() {
    const ic = (n: string) => html`<cad-icon name=${n}></cad-icon>`;
    return html`${this.titleBar()}${this.menuBar()}
      <div class="bars"><cad-toolbar first items="new open save | print preview find | cut copy paste brush | undo down redo downgray | today ahome meet publish saveweb link | track ucsfly rects | zoomwin | pan zoomrt zoombox zoomprev | props match | help helpx"></cad-toolbar>
        <cad-toolbar items="layouts layout1 |">${combo("vport", "尺度", "", nothing, true)}</cad-toolbar></div>
      <div class="bars"><cad-toolbar first items="layers layerprev"><span class="vs"></span>
          ${combo("layer", "画層", "2SAKUZU", ["bulb", "sun", "sunvp", "lock", "black"].map(ic))}<span class="vs"></span>
          ${combo("color", "色", "ByLayer", ic("black"))}<span class="vs"></span>
          ${combo("ltype", "線種", "ByLayer", html`<span class="rule"></span>`)}<span class="vs"></span>
          ${combo("lweight", "線の太さ", "ByLayer", html`<span class="rule"></span>`)}<span class="vs"></span>
          ${combo("plot", "印刷スタイル", "ByColor", nothing, true)}</cad-toolbar>
        <cad-toolbar items="zbox zdyn zscale zcenter | zin zout | zall zext"></cad-toolbar></div>
      <div class="bars"><cad-toolbar first items="ucs ucswin | ucsprev | ucsworld ucsobj ucsface ucsview | ucsorigin ucsz ucs3 | ucsrx ucsry ucsrz"></cad-toolbar>
        <cad-toolbar items="dist area mass | list xyz"></cad-toolbar>
        <cad-toolbar items="track from | endp midp intp appint | cen quad tan | perp ins node | near none | osnap"></cad-toolbar></div>
      <main class="main"><div class="palettes">
          <cad-toolbar vertical items="line xline mline pline polygon rect arc circle cloud spline ellipse insert block point hatch region mtext atext"></cad-toolbar>
          <cad-toolbar vertical items="dlin dali dord | drad ddia dang | dbase dcont | qlead tol cmark | dedit dtedit dupd | dstyle"></cad-toolbar>
          <cad-toolbar vertical items="erase mcopy mirror offset array move rotate scale stretch lengthen trim extend break1 break2 chamfer fillet explode"></cad-toolbar></div>
        ${this.workspace()}</main>
      ${this.commandArea()}${this.taskBar()}`;
  }
}
